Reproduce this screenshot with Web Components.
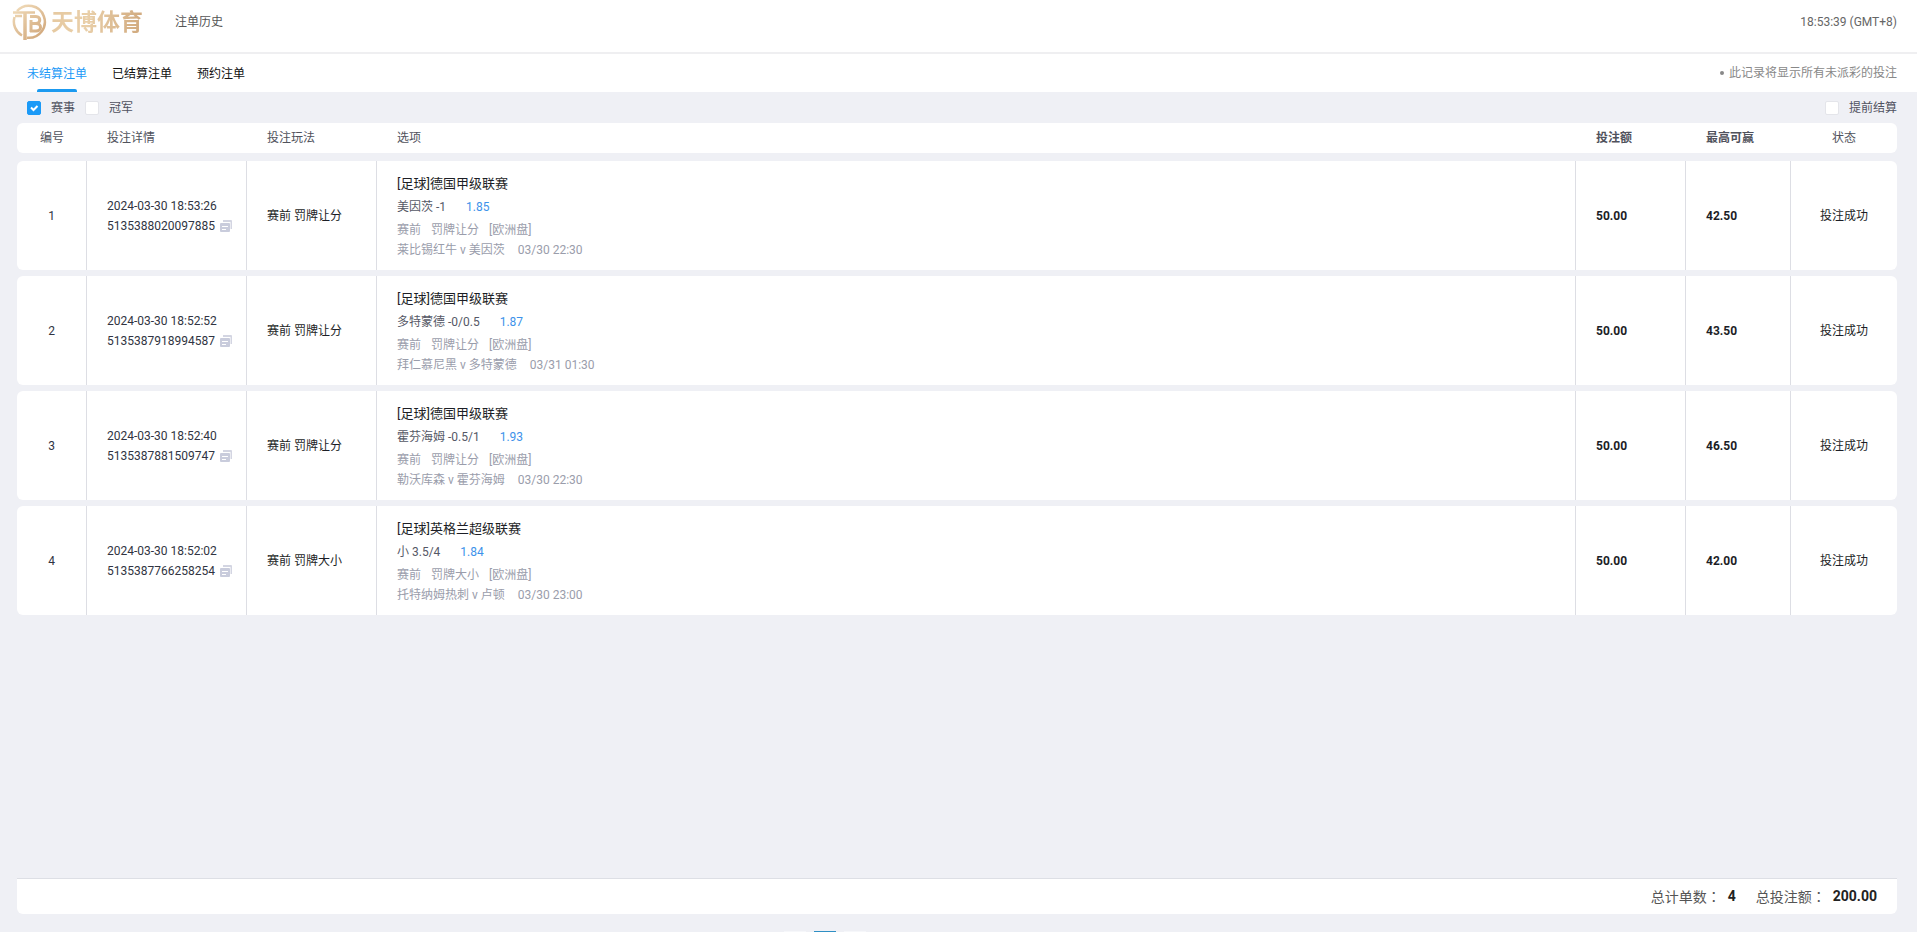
<!DOCTYPE html>
<html lang="zh-CN">
<head>
<meta charset="UTF-8">
<meta name="viewport" content="width=device-width, initial-scale=1">
<title>注单历史</title>
<style>
    body {
        margin: 0; height: 100vh; overflow: hidden; background: #eff0f5; color: #303442;
        font: 12px/20px Roboto, "Noto Sans CJK SC", sans-serif;
    }
</style>
</head>
<body>
<bet-history>
    <page-header slot="header" time="18:53:39 (GMT+8)">注单历史</page-header>
    <bet-tabs slot="header">此记录将显示所有未派彩的投注</bet-tabs>
    <div slot="filter-left">
        <check-option checked>赛事</check-option>
        <check-option>冠军</check-option>
    </div>
    <check-option slot="filter-right">提前结算</check-option>
    <bet-table></bet-table>
    <bet-summary slot="footer" count="4" amount="200.00"></bet-summary>
    <bet-pager slot="footer"></bet-pager>
</bet-history>

<script>
class BetHistory extends HTMLElement {
    constructor() {
        super();
        this.attachShadow({ mode: 'open' }).innerHTML = `
            <style>
                :host { display: flex; flex-direction: column; height: 100%; }
                main { flex: 1; min-height: 0; padding: 0 20px 0 17px; display: flex; flex-direction: column; }
                .filters { display: flex; justify-content: space-between; align-items: center; height: 30px; padding: 1px 0 0 10px; }
                ::slotted([slot="filter-left"]) { display: flex; gap: 10px; }
                .bottom { padding: 0 20px 0 17px; }
            </style>
            <slot name="header"></slot>
            <main>
                <div class="filters">
                    <slot name="filter-left"></slot>
                    <slot name="filter-right"></slot>
                </div>
                <slot></slot>
            </main>
            <div class="bottom"><slot name="footer"></slot></div>
        `;
    }
}
customElements.define('bet-history', BetHistory);

class BrandLogo extends HTMLElement {
    constructor() {
        super();
        this.attachShadow({ mode: 'open' }).innerHTML = `
            <style>
                :host { display: flex; align-items: center; gap: 3px; }
                svg { display: block; }
                span {
                    padding-bottom: 4px; font: 700 23px/32px "Noto Sans CJK SC", sans-serif; color: transparent;
                    background: linear-gradient(100deg, #e6c9a0, #e9cfa9 40%, #cfa77b); background-clip: text; -webkit-background-clip: text;
                }
            </style>
            <svg width="36" height="38" viewBox="0 0 36 38" fill="none" stroke="url(#gold)" aria-hidden="true">
                <defs>
                    <linearGradient id="gold" gradientUnits="userSpaceOnUse" x1="4" y1="2" x2="32" y2="36">
                        <stop offset="0" stop-color="#f1dcba"/>
                        <stop offset="1" stop-color="#cfa477"/>
                    </linearGradient>
                </defs>
                <path d="M5 8A16 16 0 1 1 15 34.700M2.500 14A16 16 0 0 0 10 32.500" stroke-width="2.500"/>
                <path d="M1 9.500H23M3 13H10" stroke-width="2.500"/>
                <path d="M13 10V37" stroke-width="3.500"/>
                <path d="M19 17V29M18 13.500H24C29 13.500 29 20.500 24 20.500H20M24 20.500C30 20.500 30 28 24 28H18" stroke-width="3"/>
            </svg>
            <span>天博体育</span>
        `;
    }
}
customElements.define('brand-logo', BrandLogo);

class PageHeader extends HTMLElement {
    constructor() {
        super();
        this.attachShadow({ mode: 'open' }).innerHTML = `
            <style>
                :host {
                    display: flex; align-items: center; height: 44px; padding: 0 20px 8px 12px;
                    background: #fff; border-bottom: 2px solid #efeff1; color: #555;
                }
                h1 { margin: 0 auto 0 32px; font: inherit; }
                time { color: #666; }
            </style>
            <brand-logo></brand-logo>
            <h1><slot></slot></h1>
            <time>${this.getAttribute('time')}</time>
        `;
    }
}
customElements.define('page-header', PageHeader);

class BetTabs extends HTMLElement {
    constructor() {
        super();
        this.attachShadow({ mode: 'open' }).innerHTML = `
            <style>
                :host {
                    display: flex; justify-content: space-between; align-items: center;
                    height: 38px; padding: 0 20px 0 27px; background: #fff;
                }
                nav { display: flex; gap: 25px; height: 100%; }
                button {
                    display: flex; flex-direction: column; align-items: center; justify-content: space-between;
                    padding: 1px 0 0; border: 0; background: none; font: inherit; color: #111; cursor: pointer;
                }
                button::before, button::after { content: ""; width: 40px; height: 3px; }
                button.active { color: #1b9af7; }
                button.active::after { background: #1b9af0; border-radius: 2px 2px 0 0; }
                .note { display: flex; align-items: center; gap: 5px; color: #888; }
                .note::before { content: ""; width: 4px; height: 4px; border-radius: 50%; background: #888; }
            </style>
            <nav>
                <button class="active">未结算注单</button>
                <button>已结算注单</button>
                <button>预约注单</button>
            </nav>
            <div class="note"><slot></slot></div>
        `;
        const buttons = this.shadowRoot.querySelectorAll('button');
        buttons.forEach(btn => btn.addEventListener('click', () => {
            buttons.forEach(b => b.classList.toggle('active', b === btn));
        }));
    }
}
customElements.define('bet-tabs', BetTabs);

class CheckOption extends HTMLElement {
    constructor() {
        super();
        this.attachShadow({ mode: 'open' }).innerHTML = `
            <style>
                :host { display: block; color: #4f5260; }
                label { display: flex; align-items: center; gap: 10px; cursor: pointer; }
                .box { display: grid; }
                .box > * { grid-area: 1 / 1; }
                input {
                    appearance: none; width: 14px; height: 14px; margin: 0;
                    background: #fff; border: 1px solid #e4e5ea; border-radius: 2px;
                }
                input:checked { background: #1b9af7; border-color: #1b9af7; }
                svg { pointer-events: none; }
            </style>
            <label>
                <span class="box">
                    <input type="checkbox" ${this.hasAttribute('checked') ? 'checked' : ''}>
                    <svg width="14" height="14" fill="none" stroke="#fff" stroke-width="2"><path d="M4 6.500L6.500 9L10.500 5"/></svg>
                </span>
                <slot></slot>
            </label>
        `;
    }
}
customElements.define('check-option', CheckOption);

class CopyButton extends HTMLElement {
    constructor() {
        super();
        this.attachShadow({ mode: 'open' }).innerHTML = `
            <style>
                :host { display: block; }
                button { display: block; padding: 0; border: 0; background: none; cursor: pointer; }
                svg { display: block; }
            </style>
            <button aria-label="复制">
                <svg width="12" height="12" viewBox="0 0 12 12">
                    <path d="M3 0H11Q12 0 12 1V9H10.500V2H3Z" fill="#d3d5e2"/>
                    <rect y="3" width="10" height="9" rx="1" fill="#c9ccdc"/>
                    <path d="M2 6.500H8M2 9.500H6" stroke="#fff"/>
                </svg>
            </button>
        `;
        this.shadowRoot.querySelector('button').addEventListener('click', () => {
            navigator.clipboard?.writeText(this.getAttribute('value'));
        });
    }
}
customElements.define('copy-button', CopyButton);

const bets = [
    { time: '2024-03-30 18:53:26', id: '5135388020097885', play: '罚牌让分', league: '德国甲级联赛', pick: '美因茨 -1', odds: '1.85', match: '莱比锡红牛 v 美因茨', start: '03/30 22:30', win: '42.50' },
    { time: '2024-03-30 18:52:52', id: '5135387918994587', play: '罚牌让分', league: '德国甲级联赛', pick: '多特蒙德 -0/0.5', odds: '1.87', match: '拜仁慕尼黑 v 多特蒙德', start: '03/31 01:30', win: '43.50' },
    { time: '2024-03-30 18:52:40', id: '5135387881509747', play: '罚牌让分', league: '德国甲级联赛', pick: '霍芬海姆 -0.5/1', odds: '1.93', match: '勒沃库森 v 霍芬海姆', start: '03/30 22:30', win: '46.50' },
    { time: '2024-03-30 18:52:02', id: '5135387766258254', play: '罚牌大小', league: '英格兰超级联赛', pick: '小 3.5/4', odds: '1.84', match: '托特纳姆热刺 v 卢顿', start: '03/30 23:00', win: '42.00' }
];

class BetTable extends HTMLElement {
    constructor() {
        super();
        this.attachShadow({ mode: 'open' });
        this.render(bets);
    }

    render(rows) {
        this.shadowRoot.innerHTML = `
            <style>
                :host { display: block; flex: 1; min-height: 0; overflow: auto; }
                table { display: flex; flex-direction: column; gap: 8px; }
                tbody { display: flex; flex-direction: column; gap: 6px; }
                tr {
                    display: grid; grid-template-columns: 70px 160px 130px 1fr 110px 105px 106px;
                    background: #fff; border-radius: 6px;
                }
                th, td {
                    display: flex; flex-direction: column; justify-content: center;
                    padding: 0 20px; text-align: left; font-weight: 400;
                }
                th { height: 30px; color: #50525c; }
                td { height: 109px; color: #1c1e26; border-right: 1px solid #dddee4; box-sizing: border-box; }
                td:last-child { border-right: 0; }
                th:first-child, td:first-child, th:last-child, td:last-child { align-items: center; padding: 0; }
                .money { font-weight: 700; }
                td.detail, td.num { color: #303442; }
                .id { display: flex; align-items: center; gap: 5px; }
                .line { display: flex; gap: 10px; color: #9a9dab; }
                .league { font-size: 13px; line-height: 24px; }
                .pick { gap: 20px; line-height: 22px; color: #555866; padding-bottom: 2px; }
                .match { gap: 13px; }
                .odds { color: #3d92ea; }
            </style>
            <table>
                <thead>
                    <tr>
                        <th>编号</th><th>投注详情</th><th>投注玩法</th><th>选项</th>
                        <th class="money">投注额</th><th class="money">最高可赢</th><th>状态</th>
                    </tr>
                </thead>
                <tbody>${rows.map((bet, i) => `
                    <tr>
                        <td class="num">${i + 1}</td>
                        <td class="detail">
                            <div>${bet.time}</div>
                            <div class="id">${bet.id}<copy-button value="${bet.id}"></copy-button></div>
                        </td>
                        <td>赛前 ${bet.play}</td>
                        <td>
                            <div class="league">[足球]${bet.league}</div>
                            <div class="line pick"><span>${bet.pick}</span><span class="odds">${bet.odds}</span></div>
                            <div class="line"><span>赛前</span><span>${bet.play}</span><span>[欧洲盘]</span></div>
                            <div class="line match"><span>${bet.match}</span><span>${bet.start}</span></div>
                        </td>
                        <td class="money">50.00</td>
                        <td class="money">${bet.win}</td>
                        <td>投注成功</td>
                    </tr>`).join('')}
                </tbody>
            </table>
        `;
    }
}
customElements.define('bet-table', BetTable);

class BetSummary extends HTMLElement {
    constructor() {
        super();
        this.attachShadow({ mode: 'open' }).innerHTML = `
            <style>
                :host {
                    display: flex; justify-content: flex-end; gap: 20px; padding: 0 20px; height: 35px; line-height: 35px;
                    background: #fff; border-top: 1px solid #dddfe5; border-radius: 0 0 6px 6px; font-size: 14px; color: #555;
                }
                div { display: flex; gap: 7px; }
                /* the TC face centres the full-width colon */
                span { font-family: "Noto Sans CJK TC", sans-serif; }
                b { color: #222; }
            </style>
            <div><span lang="zh-TW">总计单数：</span><b>${this.getAttribute('count')}</b></div>
            <div><span lang="zh-TW">总投注额：</span><b>${this.getAttribute('amount')}</b></div>
        `;
    }
}
customElements.define('bet-summary', BetSummary);

class BetPager extends HTMLElement {
    constructor() {
        super();
        this.attachShadow({ mode: 'open' }).innerHTML = `
            <style>
                /* only the top edge of the pager is visible above the fold */
                :host { display: flex; justify-content: center; gap: 8px; height: 1px; padding: 17px 264px 0 0; overflow: hidden; }
                button { flex: none; width: 22px; height: 22px; padding: 0; border: 0; background: #f6f7fa; }
                .current { background: #2f8fc4; }
            </style>
            <button aria-label="上一页"></button>
            <button class="current" aria-label="当前页"></button>
            <button aria-label="下一页"></button>
        `;
    }
}
customElements.define('bet-pager', BetPager);
</script>
</body>
</html>
